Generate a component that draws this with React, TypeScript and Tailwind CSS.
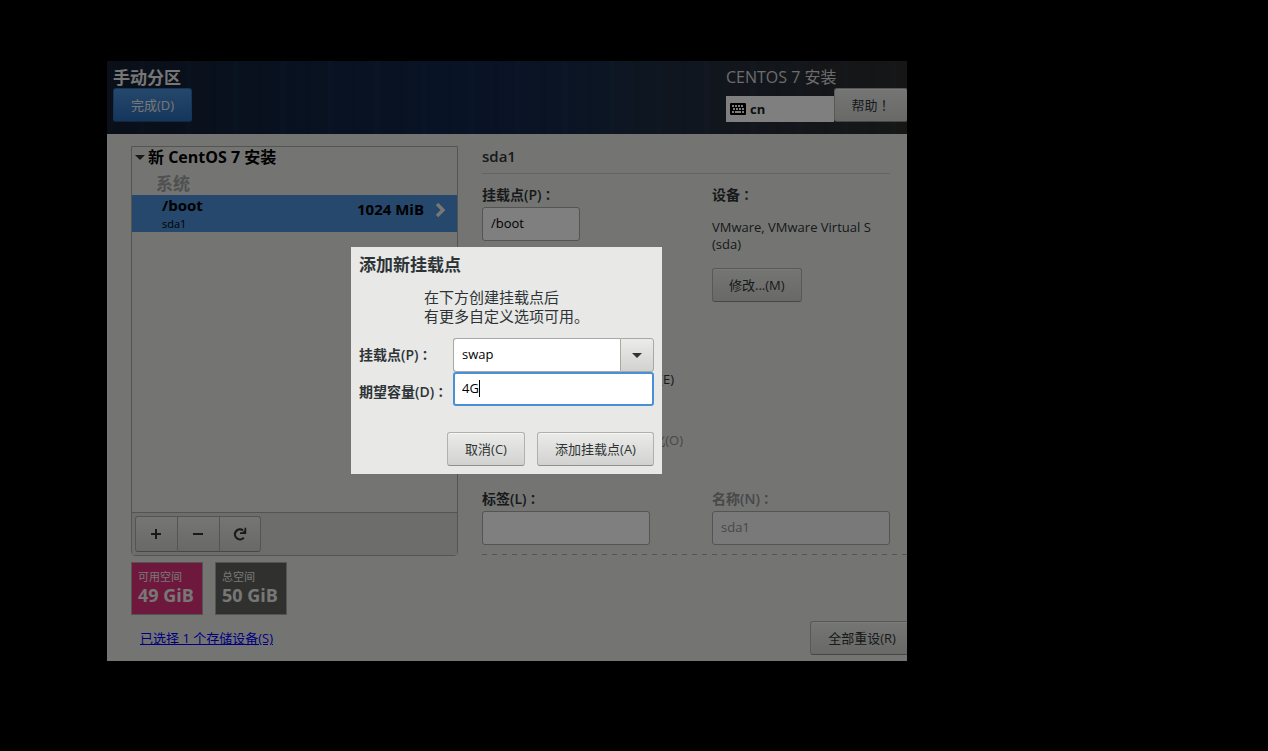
import { useState } from "react";
import type { ReactNode } from "react";

const buttonStyle =
  "h-[34px] shrink-0 rounded-[3px] border border-[#b0b0ac] border-b-[#8f8f8a] bg-linear-to-b from-[#ebebea] to-[#d2d2d0] px-4 text-[13px] leading-4 text-[#2e3436] whitespace-nowrap shadow-[inset_0_1px_0_rgba(255,255,255,0.5)]";

const toolStyle =
  "flex h-9 items-center justify-center border-y border-r border-[#a8a8a4] border-b-[#8f8f8a] bg-linear-to-b from-[#ebebea] to-[#d2d2d0]";

const inputStyle =
  "h-[34px] min-w-0 rounded-[3px] border border-[#a8a8a4] bg-white px-2 pb-[2px] text-[13px] leading-4 text-black outline-none";

const labelStyle = "text-sm leading-5 font-semibold text-[#2e3436]";

const Button = ({
  children,
  className = "",
}: {
  children: ReactNode;
  className?: string;
}) => (
  <button type="button" className={`${buttonStyle} ${className}`}>
    {children}
  </button>
);

// full-width punctuation centred in its cell
const Mark = ({ children }: { children: string }) => (
  <span
    lang="zh-TW"
    className="font-['Noto_Sans_CJK_TC',sans-serif] text-[13px] leading-none"
  >
    {children}
  </span>
);

const KeyboardIcon = () => (
  <svg width="16" height="12" viewBox="0 0 16 12" aria-hidden="true">
    <rect width="16" height="12" rx="1" fill="#000" />
    <path
      d="M2 3h2M5 3h2M8 3h2M11 3h2M3 6h2M6 6h2M9 6h2M12 6h2M2 9h2M5 9h6M12 9h2"
      stroke="#fff"
      strokeWidth="2"
    />
  </svg>
);

const Triangle = () => (
  <svg width="10" height="5" viewBox="0 0 10 5" aria-hidden="true">
    <path d="M0 0h10L5 5z" fill="#2e3436" />
  </svg>
);

const Header = () => (
  <header className="flex h-[73px] justify-between bg-[repeating-linear-gradient(90deg,transparent_0_9px,rgba(0,0,0,0.05)_12px_14px,transparent_17px_31px,rgba(60,110,180,0.05)_34px_36px,transparent_39px_47px),linear-gradient(90deg,#141f30_0%,#12223c_15%,#10264a_40%,#14284a_55%,#1b2c44_65%,#242d3a_78%,#2c2c2c_100%)] pl-[6px]">
    <div>
      <h1 className="pt-[6px] text-[17px] leading-[21px] font-bold text-[#eeeeec]">
        手动分区
      </h1>
      <button
        type="button"
        className="h-[34px] w-[79px] rounded-[3px] border border-[#2a6cb0] border-b-[#1c4f87] bg-linear-to-b from-[#4a90d9] to-[#2a6db8] text-[13px] leading-4 text-[#eeeeec]"
      >
        完成(D)
      </button>
    </div>
    <div>
      <p className="pt-[6px] text-base leading-[21px] text-[#d8d8d6]">
        CENTOS 7 安装
      </p>
      <div className="flex items-end">
        <div className="flex h-[26px] w-[108px] items-center gap-1 bg-white pl-1 text-[13px] leading-4 font-bold text-[#1c1f20]">
          <KeyboardIcon />
          cn
        </div>
        <Button className="-mr-px min-w-[74px]">
          帮助<Mark>！</Mark>
        </Button>
      </div>
    </div>
  </header>
);

const MountList = () => (
  <section className="rounded-b-[4px] border border-[#a8a8a4]">
    <div className="h-[365px]">
      <button
        type="button"
        aria-expanded="true"
        className="flex h-5 items-center gap-[3px] pl-[3px] text-base leading-5 font-bold text-black"
      >
        <Triangle />
        新 CentOS 7 安装
      </button>
      <p className="pt-[5px] pl-6 text-[17px] leading-[23px] font-bold text-[#a0a0a0]">
        系统
      </p>
      <button
        type="button"
        className="flex h-[37px] w-full items-center bg-[#4a90d9] pr-[11px] pl-[30px] text-left text-black"
      >
        <span className="flex-1">
          <span className="block text-[15px] leading-[19px] font-bold">
            /boot
          </span>
          <span className="block text-[11px] leading-[17px]">sda1</span>
        </span>
        <span className="pb-[9px] text-[15px] leading-5 font-bold">
          1024 MiB
        </span>
        <svg
          className="mb-2 ml-[11px]"
          width="11"
          height="16"
          viewBox="0 0 11 16"
          aria-hidden="true"
        >
          <path
            d="M2 2l6 6-6 6"
            fill="none"
            stroke="#eeeeec"
            strokeWidth="3.4"
          />
        </svg>
      </button>
    </div>
    <div className="flex border-t border-[#a8a8a4] bg-[#dbdbd8] p-[3px]">
      <button
        type="button"
        aria-label="添加"
        className={`${toolStyle} w-[43px] rounded-l-[3px] border-l`}
      >
        <svg width="11" height="10" viewBox="0 0 11 10" aria-hidden="true">
          <path d="M5 0v10M0 5h10" stroke="#2e3436" strokeWidth="2" />
        </svg>
      </button>
      <button
        type="button"
        aria-label="删除"
        className={`${toolStyle} w-[42px]`}
      >
        <svg width="11" height="10" viewBox="0 0 11 10" aria-hidden="true">
          <path d="M0 5h10" stroke="#2e3436" strokeWidth="2" />
        </svg>
      </button>
      <button
        type="button"
        aria-label="重新载入"
        className={`${toolStyle} w-[41px] rounded-r-[3px]`}
      >
        <svg width="14" height="14" viewBox="0 0 14 14" aria-hidden="true">
          <path
            d="M10 3.4A5 5 0 1 0 10.8 10.6"
            fill="none"
            stroke="#2e3436"
            strokeWidth="2.2"
          />
          <path d="M13.2 0.8V7H7V5.2h2.6L11.6 3V0.8z" fill="#2e3436" />
        </svg>
      </button>
    </div>
  </section>
);

const SpaceBox = ({
  title,
  size,
  color,
}: {
  title: string;
  size: string;
  color: string;
}) => (
  <div
    className={`h-[53px] w-[72px] border border-[#a8a8a4] pt-[5px] pl-[6px] whitespace-nowrap text-[#eeeeec] ${color}`}
  >
    <p className="text-[11px] leading-[17px]">{title}</p>
    <p className="text-lg leading-5 font-bold">{size}</p>
  </div>
);

const DeviceDetails = () => {
  const [mountPoint, setMountPoint] = useState("/boot");
  const [label, setLabel] = useState("");
  return (
    <section className="min-w-0 flex-1">
      <h2 className="mr-[17px] border-b border-[#c8c8c6] pb-[6px] text-[15px] leading-[21px] font-semibold text-[#2e3436]">
        sda1
      </h2>
      <div className="mr-[17px] grid grid-cols-[230px_minmax(0,1fr)] pt-[11px]">
        <div className="flex flex-col items-start">
          <label htmlFor="mount" className={`${labelStyle} mb-[2px]`}>
            挂载点(P)<Mark>：</Mark>
          </label>
          <input
            id="mount"
            className={`${inputStyle} w-[98px]`}
            value={mountPoint}
            onChange={(e) => setMountPoint(e.target.value)}
          />
          <label className="mt-[128px] mr-[38px] flex items-center gap-2 self-end text-[13px] leading-5 text-[#2e3436]">
            <input type="checkbox" />
            加密(E)
          </label>
          <label className="mt-[41px] mr-[29px] flex items-center gap-2 self-end text-[13px] leading-5 text-[#8e9192]">
            <input type="checkbox" disabled />
            重新格式化(O)
          </label>
        </div>
        <div className="flex flex-col items-start">
          <h3 className={labelStyle}>
            设备<Mark>：</Mark>
          </h3>
          <p className="mt-[14px] text-[13px] leading-[17px] text-[#2e3436]">
            VMware, VMware Virtual S
            <br />
            (sda)
          </p>
          <Button className="mt-[15px]">修改...(M)</Button>
        </div>
      </div>
      <div className="mr-[17px] grid grid-cols-[230px_minmax(0,1fr)] pt-[39px]">
        <div className="flex flex-col">
          <label htmlFor="label" className={`${labelStyle} mb-[2px]`}>
            标签(L)<Mark>：</Mark>
          </label>
          <input
            id="label"
            className={`${inputStyle} w-[168px]`}
            value={label}
            onChange={(e) => setLabel(e.target.value)}
          />
        </div>
        <div className="flex flex-col">
          <label
            htmlFor="name"
            className="mb-[2px] text-sm leading-5 font-semibold text-[#8e9192]"
          >
            名称(N)<Mark>：</Mark>
          </label>
          <input
            id="name"
            className="h-[34px] min-w-0 rounded-[3px] border border-[#a8a8a4] bg-[#f2f2f2] px-2 pb-[2px] text-[13px] leading-4 text-[#8e9192]"
            value="sda1"
            disabled
          />
        </div>
      </div>
      <div className="mt-[9px] h-px bg-[repeating-linear-gradient(90deg,#a8a8a4_0_5px,transparent_5px_10px)]" />
    </section>
  );
};

const AddMountDialog = () => {
  const [mountPoint, setMountPoint] = useState("swap");
  const [capacity, setCapacity] = useState("4G");
  return (
    <div
      role="dialog"
      aria-labelledby="dialog-title"
      className="mr-px mb-px w-[311px] bg-[#e8e8e7] p-2 text-[#2e3436]"
    >
      <h2 id="dialog-title" className="text-[17px] leading-5 font-bold">
        添加新挂载点
      </h2>
      <p className="pt-[13px] pb-px pl-[65px] text-[15px] leading-[19px]">
        在下方创建挂载点后
        <br />
        有更多自定义选项可用。
      </p>
      <div className="mt-[11px] grid grid-cols-[94px_minmax(0,1fr)] items-center">
        <label htmlFor="new-mount" className={labelStyle}>
          挂载点(P)<Mark>：</Mark>
        </label>
        <div className="flex">
          <input
            id="new-mount"
            className={`${inputStyle} flex-1 rounded-r-none border-r-0`}
            value={mountPoint}
            onChange={(e) => setMountPoint(e.target.value)}
          />
          <button
            type="button"
            aria-label="挂载点"
            className="flex h-[34px] w-[34px] items-center justify-center rounded-r-[3px] border border-[#a8a8a4] bg-linear-to-b from-[#ebebea] to-[#d2d2d0]"
          >
            <Triangle />
          </button>
        </div>
        <label htmlFor="capacity" className={`${labelStyle} pt-[6px]`}>
          期望容量(D)<Mark>：</Mark>
        </label>
        <div className="relative flex">
          <input
            id="capacity"
            className="h-[34px] min-w-0 flex-1 rounded-[3px] border-2 border-[#4a90d9] bg-white px-[7px] pb-[2px] text-[13px] leading-4 text-black caret-transparent outline-none"
            value={capacity}
            onChange={(e) => setCapacity(e.target.value)}
          />
          <span className="absolute top-2 left-[26px] h-[17px] w-px bg-black" />
        </div>
      </div>
      <div className="mt-[26px] flex justify-end gap-3">
        <Button className="min-w-[78px]">取消(C)</Button>
        <Button className="min-w-[117px]">添加挂载点(A)</Button>
      </div>
    </div>
  );
};

export default function App() {
  return (
    <div className="min-h-screen bg-black pt-[61px] pl-[107px] font-['Open_Sans','Noto_Sans_CJK_SC',sans-serif]">
      <div className="relative w-full max-w-[800px] overflow-hidden bg-[#e8e8e7]">
        <Header />
        <main className="flex gap-6 pt-3 pl-6">
          <div className="w-[327px] shrink-0">
            <MountList />
            <div className="flex gap-3 pt-[6px]">
              <SpaceBox title="可用空间" size="49 GiB" color="bg-[#df307a]" />
              <SpaceBox title="总空间" size="50 GiB" color="bg-[#60605c]" />
            </div>
          </div>
          <DeviceDetails />
        </main>
        <footer className="flex items-center justify-between py-[6px] pl-[33px]">
          <a
            href="#storage"
            className="text-[13px] leading-5 text-[#0000ff] underline"
          >
            已选择 1 个存储设备(S)
          </a>
          <Button className="-mr-[7px] min-w-[104px]">全部重设(R)</Button>
        </footer>
        <div className="absolute inset-0 flex items-center justify-center bg-black/50">
          <AddMountDialog />
        </div>
      </div>
    </div>
  );
}
